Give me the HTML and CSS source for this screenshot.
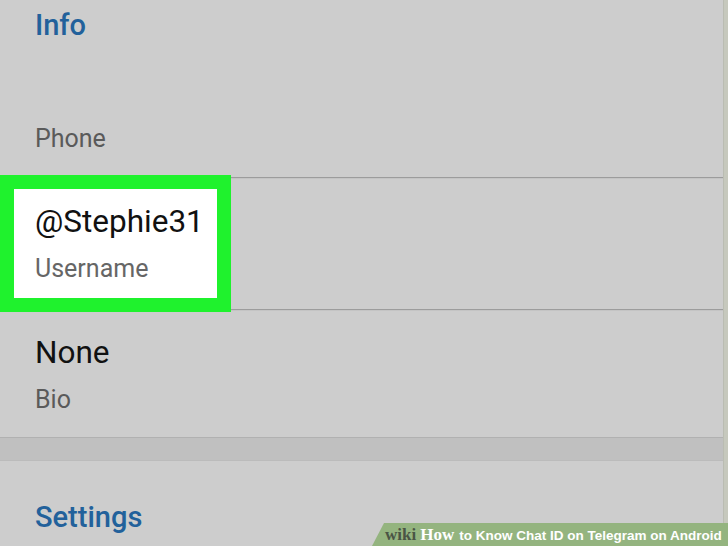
FILE: index.html
```html
<!DOCTYPE html>
<html>
<head>
<meta charset="utf-8">
<link rel="stylesheet" href="styles.css">
</head>
<body>
<div class="screen">
  <div class="section">
    <div class="section-title">Info</div>
    <div class="row row-phone">
      <div class="secondary">Phone</div>
    </div>
    <div class="divider"></div>
    <div class="row row-user">
      <div class="highlight"></div>
      <div class="primary">@Stephie31</div>
      <div class="secondary">Username</div>
    </div>
    <div class="divider"></div>
    <div class="row row-bio">
      <div class="primary">None</div>
      <div class="secondary">Bio</div>
    </div>
  </div>
  <div class="band"></div>
  <div class="section-title settings">Settings</div>
  <div class="edge"></div>
  <div class="watermark">
    <span class="wm-wiki">wiki</span><span class="wm-how">How</span><span class="wm-rest">to Know Chat ID on Telegram on Android</span>
  </div>
</div>
</body>
</html>
```

FILE: styles.css
```css
html, body {
  margin: 0;
  padding: 0;
}

body {
  background: #cccccc;
  font-family: Roboto, "Noto Sans", sans-serif;
}

.screen {
  position: relative;
  width: 728px;
  height: 546px;
  overflow: hidden;
  background: #cdcdcd;
}

.section-title {
  padding-left: 35px;
  margin-top: 8px;
  font-size: 29px;
  line-height: 34px;
  font-weight: 500;
  color: #22619b;
}

.row {
  position: relative;
  padding-left: 35px;
}

.row-phone {
  padding-top: 83px;
  padding-bottom: 24px;
}

.row-user {
  padding-top: 25px;
  padding-bottom: 26px;
}

.row-bio {
  padding-top: 24px;
  padding-bottom: 23px;
}

.primary {
  position: relative;
  font-size: 31.5px;
  line-height: 36px;
  color: #111111;
  margin-bottom: 15px;
}

.secondary {
  position: relative;
  font-size: 25px;
  line-height: 28px;
  color: #5a5a5a;
}

.row-user .secondary {
  color: #666666;
}

.divider {
  height: 1px;
  background: #9c9c9c;
  border-bottom: 1px solid #c4c4c4;
}

.highlight {
  position: absolute;
  left: 0;
  top: -4px;
  width: 203px;
  height: 109px;
  background: #ffffff;
  border: 14px solid #1ff22d;
}

.band {
  height: 22px;
  background: #c0c0c0;
  border-top: 1px solid #b1b1b1;
  border-bottom: 1px solid #bbbbbb;
}

.settings {
  margin-top: 39px;
}

.edge {
  position: absolute;
  top: 0;
  right: 0;
  width: 4px;
  height: 100%;
  background: #c6c8bd;
  border-left: 1px solid #babcb2;
}

.watermark {
  position: absolute;
  left: 372px;
  right: 0;
  bottom: 0;
  height: 23px;
  background: #94b47f;
  clip-path: polygon(12px 0, 100% 0, 100% 100%, 0 100%);
  display: flex;
  align-items: baseline;
  padding-left: 13px;
  padding-top: 2px;
  box-sizing: border-box;
  white-space: nowrap;
}

.wm-wiki {
  font-family: "Liberation Serif", serif;
  font-weight: 700;
  font-size: 17px;
  color: #4a5545;
}

.wm-how {
  font-family: "Liberation Serif", serif;
  font-weight: 700;
  font-size: 17px;
  color: #ffffff;
  margin-left: 4px;
}

.wm-rest {
  font-family: "Liberation Sans", Arial, sans-serif;
  font-weight: 700;
  font-size: 13.5px;
  color: #ffffff;
  margin-left: 5px;
}
```
